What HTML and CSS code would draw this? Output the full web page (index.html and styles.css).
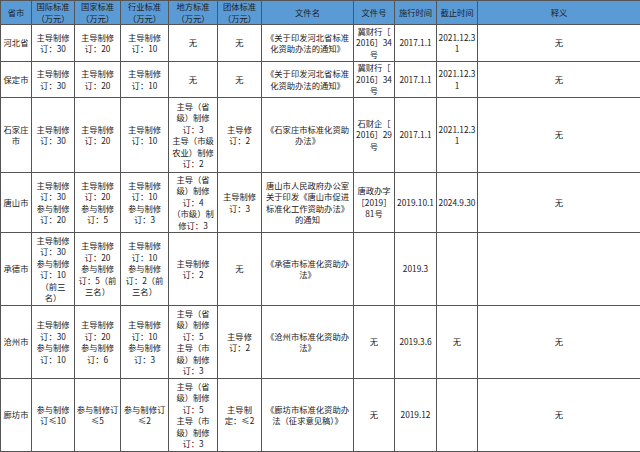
FILE: index.html
```html
<!DOCTYPE html>
<html lang="zh-CN">
<head>
<meta charset="utf-8">
<title>河北省标准化资助办法</title>
<link rel="stylesheet" href="styles.css">
</head>
<body>
<table class="grid">
  <colgroup>
    <col class="c-city"><col class="c-intl"><col class="c-nat"><col class="c-ind"><col class="c-loc"><col class="c-grp"><col class="c-doc"><col class="c-no"><col class="c-start"><col class="c-end"><col class="c-note">
  </colgroup>
  <thead>
    <tr class="r-head">
      <th>省市</th>
      <th>国际标准<br>（万元）</th>
      <th>国家标准<br>（万元）</th>
      <th>行业标准<br>（万元）</th>
      <th>地方标准<br>（万元）</th>
      <th>团体标准<br>（万元）</th>
      <th>文件名</th>
      <th>文件号</th>
      <th>施行时间</th>
      <th>截止时间</th>
      <th>释义</th>
    </tr>
  </thead>
  <tbody>
    <tr class="r1">
      <td>河北省</td>
      <td>主导制修<br>订：30</td>
      <td>主导制修<br>订：20</td>
      <td>主导制修<br>订：10</td>
      <td>无</td>
      <td>无</td>
      <td>《关于印发河北省标准<br>化资助办法的通知》</td>
      <td>冀财行［<br>2016］34<br>号</td>
      <td>2017.1.1</td>
      <td>2021.12.3<br>1</td>
      <td>无</td>
    </tr>
    <tr class="r2">
      <td>保定市</td>
      <td>主导制修<br>订：30</td>
      <td>主导制修<br>订：20</td>
      <td>主导制修<br>订：10</td>
      <td>无</td>
      <td>无</td>
      <td>《关于印发河北省标准<br>化资助办法的通知》</td>
      <td>冀财行［<br>2016］34<br>号</td>
      <td>2017.1.1</td>
      <td>2021.12.3<br>1</td>
      <td>无</td>
    </tr>
    <tr class="r3">
      <td>石家庄<br>市</td>
      <td>主导制修<br>订：30</td>
      <td>主导制修<br>订：20</td>
      <td>主导制修<br>订：10</td>
      <td>主导（省<br>级）制修<br>订：3<br>主导（市级<br>农业）制修<br>订：2</td>
      <td>主导修<br>订：2</td>
      <td>《石家庄市标准化资助<br>办法》</td>
      <td>石财企［<br>2016］29<br>号</td>
      <td>2017.1.1</td>
      <td>2021.12.3<br>1</td>
      <td>无</td>
    </tr>
    <tr class="r4">
      <td>唐山市</td>
      <td>主导制修<br>订：30<br>参与制修<br>订：20</td>
      <td>主导制修<br>订：20<br>参与制修<br>订：5</td>
      <td>主导制修<br>订：10<br>参与制修<br>订：3</td>
      <td>主导（省<br>级）制修<br>订：4<br>（市级）制<br>修订：3</td>
      <td>主导制修<br>订：3</td>
      <td>唐山市人民政府办公室<br>关于印发《唐山市促进<br>标准化工作资助办法》<br>的通知</td>
      <td>唐政办字<br>［2019］<br>81号</td>
      <td>2019.10.1</td>
      <td>2024.9.30</td>
      <td>无</td>
    </tr>
    <tr class="r5">
      <td>承德市</td>
      <td>主导制修<br>订：30<br>参与制修<br>订：10<br>（前三<br>名）</td>
      <td>主导制修<br>订：20<br>参与制修<br>订：5（前<br>三名）</td>
      <td>主导制修<br>订：10<br>参与制修<br>订：2（前<br>三名）</td>
      <td>主导制修<br>订：2</td>
      <td>无</td>
      <td>《承德市标准化资助办<br>法》</td>
      <td></td>
      <td>2019.3</td>
      <td></td>
      <td></td>
    </tr>
    <tr class="r6">
      <td>沧州市</td>
      <td>主导制修<br>订：30<br>参与制修<br>订：10</td>
      <td>主导制修<br>订：20<br>参与制修<br>订：6</td>
      <td>主导制修<br>订：10<br>参与制修<br>订：3</td>
      <td>主导（省<br>级）制修<br>订：5<br>主导（市<br>级）制修<br>订：3</td>
      <td>主导修<br>订：2</td>
      <td>《沧州市标准化资助办<br>法》</td>
      <td>无</td>
      <td>2019.3.6</td>
      <td>无</td>
      <td>无</td>
    </tr>
    <tr class="r7">
      <td>廊坊市</td>
      <td>参与制修<br>订≤10</td>
      <td>参与制修订<br>≤5</td>
      <td>参与制修订<br>≤2</td>
      <td>主导（省<br>级）制修<br>订：5<br>主导（市<br>级）制修<br>订：3</td>
      <td>主导制<br>定：≤2</td>
      <td>《廊坊市标准化资助办<br>法（征求意见稿）》</td>
      <td>无</td>
      <td>2019.12</td>
      <td></td>
      <td>无</td>
    </tr>
  </tbody>
</table>
</body>
</html>
```

FILE: styles.css
```css
html, body {
  margin: 0;
  padding: 0;
  background: #ffffff;
}

.grid {
  width: 640px;
  table-layout: fixed;
  border-collapse: collapse;
  font-family: "Noto Sans CJK SC", "Noto Sans", sans-serif;
  font-size: 8.3px;
  line-height: 11.5px;
  color: #222222;
}

.grid th,
.grid td {
  border: 1px solid #555555;
  padding: 0;
  text-align: center;
  vertical-align: middle;
  white-space: nowrap;
  overflow: hidden;
  font-weight: normal;
}

.grid th {
  background: #5b9bd5;
  color: #1e1e1e;
}

.c-city { width: 31px; }
.c-intl { width: 43px; }
.c-nat { width: 46px; }
.c-ind { width: 48px; }
.c-loc { width: 49px; }
.c-grp { width: 44px; }
.c-doc { width: 92px; }
.c-no { width: 41px; }
.c-start { width: 42px; }
.c-end { width: 41px; }
.c-note { width: 163px; }

.r-head { height: 24px; }
.r1 { height: 37px; }
.r2 { height: 36px; }
.r3 { height: 75px; }
.r4 { height: 60px; }
.r5 { height: 73px; }
.r6 { height: 73px; }
.r7 { height: 73px; }
```
